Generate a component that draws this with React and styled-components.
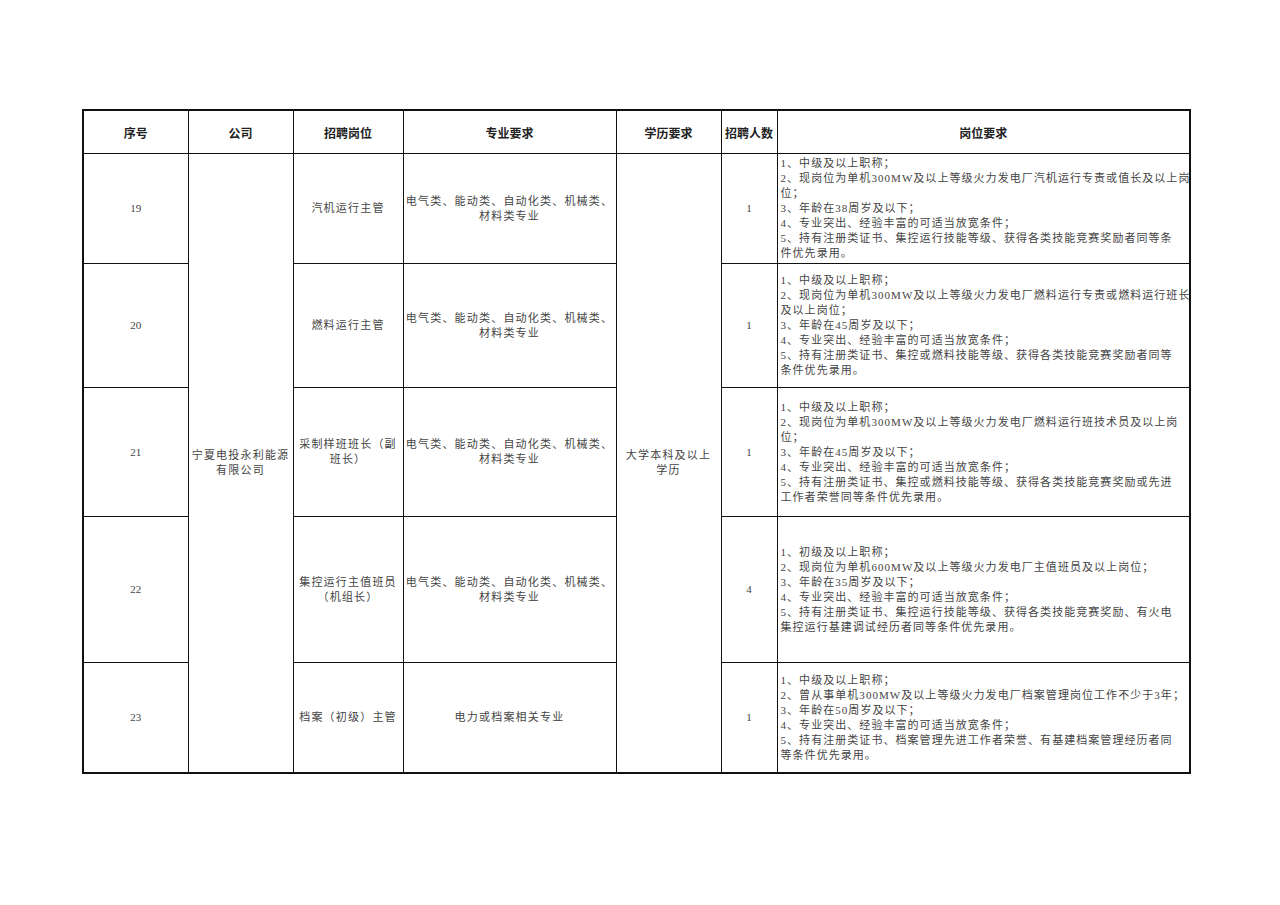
import React from "react";
import styled, { createGlobalStyle } from "styled-components";

const Global = createGlobalStyle`
  html, body { margin: 0; padding: 0; background: #fff; }
  body { font-family: "Liberation Serif", "Noto Sans CJK SC", serif; }
`;

const Page = styled.div`
  width: 1280px;
  height: 905px;
  padding: 109px 0 0 82px;
  box-sizing: border-box;
`;

const Table = styled.table`
  width: 1107px;
  border-collapse: collapse;
  table-layout: fixed;
  border: 2px solid #111;
`;

const HeadCell = styled.th`
  height: 42px;
  border: 1px solid #111;
  font-family: "Liberation Sans", "Noto Sans CJK SC", sans-serif;
  font-size: 12px;
  font-weight: 700;
  color: #222;
  text-align: center;
  vertical-align: middle;
  padding: 0;
  white-space: nowrap;
`;

const Cell = styled.td`
  border: 1px solid #111;
  height: ${(p) => p.$h || 0}px;
  padding: 0 ${(p) => (p.$left ? "2px 0 3px" : "1px")};
  text-align: ${(p) => (p.$left ? "left" : "center")};
  vertical-align: middle;
  font-size: 11px;
  line-height: 15px;
  letter-spacing: ${(p) => (p.$num ? "0" : p.$left ? "1.05px" : "1.2px")};
  color: #444;
`;

const Line = styled.span`
  display: block;
  white-space: nowrap;
`;

const Lines = ({ lines }) => lines.map((l, i) => <Line key={i}>{l}</Line>);

const MAJOR = ["电气类、能动类、自动化类、机械类、", "材料类专业"];

const rows = [
  {
    no: "19",
    h: 109,
    post: ["汽机运行主管"],
    major: MAJOR,
    count: "1",
    req: [
      "1、中级及以上职称；",
      "2、现岗位为单机300MW及以上等级火力发电厂汽机运行专责或值长及以上岗",
      "位；",
      "3、年龄在38周岁及以下；",
      "4、专业突出、经验丰富的可适当放宽条件；",
      "5、持有注册类证书、集控运行技能等级、获得各类技能竞赛奖励者同等条",
      "件优先录用。",
    ],
  },
  {
    no: "20",
    h: 123,
    post: ["燃料运行主管"],
    major: MAJOR,
    count: "1",
    req: [
      "1、中级及以上职称；",
      "2、现岗位为单机300MW及以上等级火力发电厂燃料运行专责或燃料运行班长",
      "及以上岗位；",
      "3、年龄在45周岁及以下；",
      "4、专业突出、经验丰富的可适当放宽条件；",
      "5、持有注册类证书、集控或燃料技能等级、获得各类技能竞赛奖励者同等",
      "条件优先录用。",
    ],
  },
  {
    no: "21",
    h: 128,
    post: ["采制样班班长（副", "班长）"],
    major: MAJOR,
    count: "1",
    req: [
      "1、中级及以上职称；",
      "2、现岗位为单机300MW及以上等级火力发电厂燃料运行班技术员及以上岗",
      "位；",
      "3、年龄在45周岁及以下；",
      "4、专业突出、经验丰富的可适当放宽条件；",
      "5、持有注册类证书、集控或燃料技能等级、获得各类技能竞赛奖励或先进",
      "工作者荣誉同等条件优先录用。",
    ],
  },
  {
    no: "22",
    h: 145,
    post: ["集控运行主值班员", "（机组长）"],
    major: MAJOR,
    count: "4",
    req: [
      "1、初级及以上职称；",
      "2、现岗位为单机600MW及以上等级火力发电厂主值班员及以上岗位；",
      "3、年龄在35周岁及以下；",
      "4、专业突出、经验丰富的可适当放宽条件；",
      "5、持有注册类证书、集控运行技能等级、获得各类技能竞赛奖励、有火电",
      "集控运行基建调试经历者同等条件优先录用。",
    ],
  },
  {
    no: "23",
    h: 109,
    post: ["档案（初级）主管"],
    major: ["电力或档案相关专业"],
    count: "1",
    req: [
      "1、中级及以上职称；",
      "2、曾从事单机300MW及以上等级火力发电厂档案管理岗位工作不少于3年；",
      "3、年龄在50周岁及以下；",
      "4、专业突出、经验丰富的可适当放宽条件；",
      "5、持有注册类证书、档案管理先进工作者荣誉、有基建档案管理经历者同",
      "等条件优先录用。",
    ],
  },
];

export default function App() {
  return (
    <>
      <Global />
      <Page>
        <Table>
          <colgroup>
            <col style={{ width: 105 }} />
            <col style={{ width: 105 }} />
            <col style={{ width: 110 }} />
            <col style={{ width: 213 }} />
            <col style={{ width: 105 }} />
            <col style={{ width: 56 }} />
            <col style={{ width: 413 }} />
          </colgroup>
          <thead>
            <tr>
              <HeadCell>序号</HeadCell>
              <HeadCell>公司</HeadCell>
              <HeadCell>招聘岗位</HeadCell>
              <HeadCell>专业要求</HeadCell>
              <HeadCell>学历要求</HeadCell>
              <HeadCell>招聘人数</HeadCell>
              <HeadCell>岗位要求</HeadCell>
            </tr>
          </thead>
          <tbody>
            {rows.map((r, i) => (
              <tr key={r.no}>
                <Cell $h={r.h} $num>{r.no}</Cell>
                {i === 0 && (
                  <Cell rowSpan={5}>
                    <Lines lines={["宁夏电投永利能源", "有限公司"]} />
                  </Cell>
                )}
                <Cell>
                  <Lines lines={r.post} />
                </Cell>
                <Cell>
                  <Lines lines={r.major} />
                </Cell>
                {i === 0 && (
                  <Cell rowSpan={5}>
                    <Lines lines={["大学本科及以上", "学历"]} />
                  </Cell>
                )}
                <Cell $num>{r.count}</Cell>
                <Cell $left>
                  <Lines lines={r.req} />
                </Cell>
              </tr>
            ))}
          </tbody>
        </Table>
      </Page>
    </>
  );
}
